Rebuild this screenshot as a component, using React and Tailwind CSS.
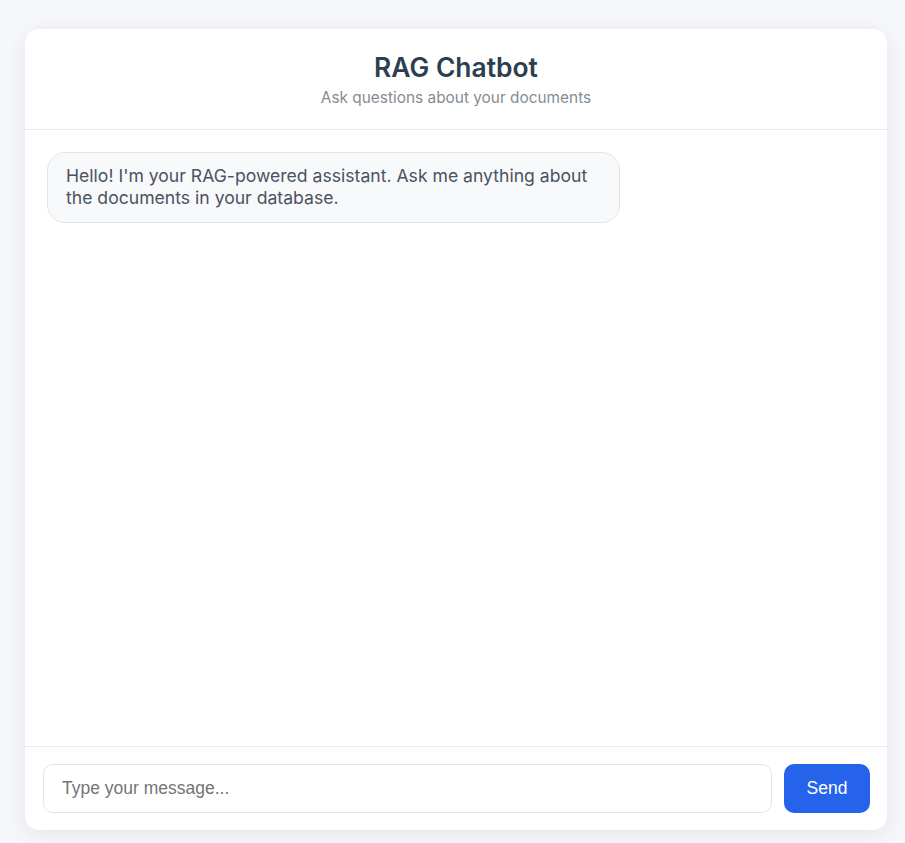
import { useState } from "react";

const Message = ({ text }) => {
  return (
    <div className="max-w-[70%] self-start rounded-[18px] border border-[#e1e5e9] bg-[#f8f9fa] px-[18px] pb-[13px] pt-3 text-[17.6px] leading-[22px] text-[#4a5263]">
      {text}
    </div>
  );
};

export default function App() {
  const [input, setInput] = useState("");
  const [messages] = useState([
    {
      role: "assistant",
      text: "Hello! I'm your RAG-powered assistant. Ask me anything about the documents in your database.",
    },
  ]);

  return (
    <div className="h-[843px] bg-[#f5f7fa] pb-[13px] pl-[25px] pr-[18px] pt-[29px] font-['Inter',sans-serif]">
      <div className="flex h-full flex-col overflow-hidden rounded-[14px] bg-white shadow-[0_4px_20px_rgba(0,0,0,0.08)]">
        <div className="border-b border-[#e9ecef] pb-[21px] pt-6 text-center">
          <h1 className="text-[26.4px] font-semibold leading-[29px] text-[#2c3e50]">
            RAG Chatbot
          </h1>
          <p className="mt-[5px] text-[15.4px] leading-[21px] text-[#858c94]">
            Ask questions about your documents
          </p>
        </div>
        <div className="flex flex-1 flex-col gap-3 overflow-y-auto px-[22px] pb-[22px] pt-[22px]">
          {messages.map((m, i) => (
            <Message key={i} text={m.text} />
          ))}
        </div>
        <div className="flex gap-3 border-t border-[#e9ecef] py-[17px] pl-[18px] pr-[17px]">
          <input
            value={input}
            onChange={(e) => setInput(e.target.value)}
            placeholder="Type your message..."
            className="h-[49px] flex-1 rounded-[10px] border border-[#e1e5e9] px-[18px] font-['Liberation_Sans',Arial,sans-serif] text-[17.5px] text-[#333] outline-none placeholder:text-[#757575]"
          />
          <button className="h-[49px] w-[86px] rounded-[10px] bg-[#2563eb] font-['Liberation_Sans',Arial,sans-serif] text-[17.5px] text-white">
            Send
          </button>
        </div>
      </div>
    </div>
  );
}
